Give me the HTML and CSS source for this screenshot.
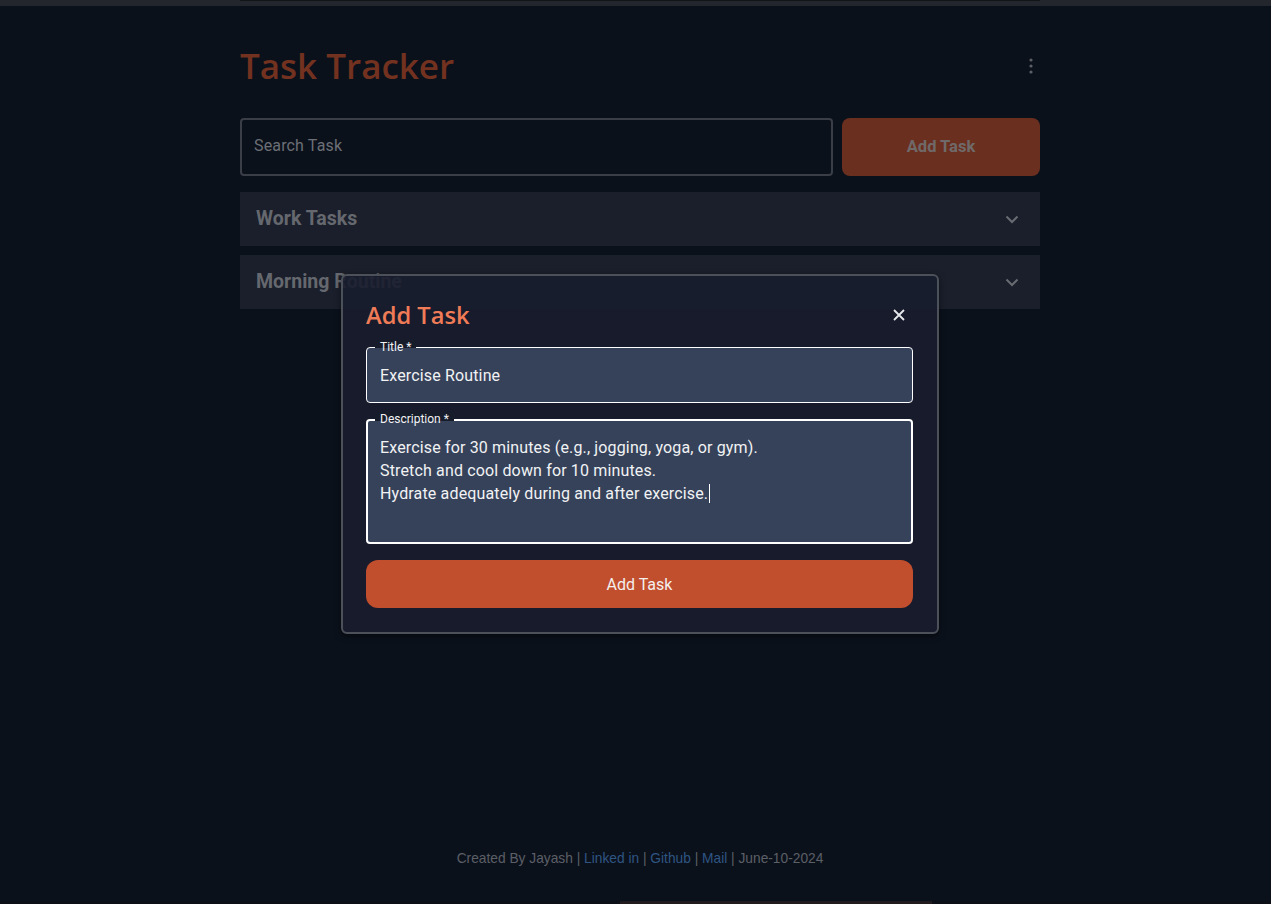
FILE: index.html
```html
<!DOCTYPE html>
<html>
<head>
<meta charset="utf-8">
<link rel="stylesheet" href="styles.css">
</head>
<body>
<div class="page">
  <div class="topbar"><div class="topline"></div></div>
  <main class="container">
    <header class="header">
      <h1 class="app-title">Task Tracker</h1>
      <svg class="kebab" width="6" height="16" viewBox="0 0 6 16"><circle cx="3" cy="2" r="1.6" fill="#5c6066"/><circle cx="3" cy="8" r="1.6" fill="#5c6066"/><circle cx="3" cy="14" r="1.6" fill="#5c6066"/></svg>
    </header>
    <div class="search-row">
      <div class="search-box"><span class="placeholder">Search Task</span></div>
      <div class="add-btn">Add Task</div>
    </div>
    <div class="accordion">
      <span class="acc-title">Work Tasks</span>
      <svg class="chev" width="14" height="9" viewBox="0 0 14 9"><path d="M1.5 1.5 L7 7 L12.5 1.5" stroke="#686b71" stroke-width="2" fill="none"/></svg>
    </div>
    <div class="accordion">
      <span class="acc-title">Morning Routine</span>
      <svg class="chev" width="14" height="9" viewBox="0 0 14 9"><path d="M1.5 1.5 L7 7 L12.5 1.5" stroke="#686b71" stroke-width="2" fill="none"/></svg>
    </div>
  </main>
  <footer class="footer">Created By Jayash | <a>Linked in</a> | <a>Github</a> | <a>Mail</a> | June-10-2024</footer>
  <div class="bottom-strip"><div class="bottom-bits"></div></div>
</div>

<div class="dialog">
  <div class="dlg-head">
    <h2 class="dlg-title">Add Task</h2>
    <svg class="close" width="14" height="14" viewBox="0 0 14 14"><path d="M2 2 L12 12 M12 2 L2 12" stroke="#e6e8ec" stroke-width="1.8"/></svg>
  </div>
  <div class="field title-field">
    <span class="flabel">Title *</span>
    <span class="fvalue">Exercise Routine</span>
  </div>
  <div class="field desc-field">
    <span class="flabel">Description *</span>
    <div class="fvalue">Exercise for 30 minutes (e.g., jogging, yoga, or gym).<br>Stretch and cool down for 10 minutes.<br>Hydrate adequately during and after exercise.<span class="caret"></span></div>
  </div>
  <div class="submit">Add Task</div>
</div>
</body>
</html>
```

FILE: styles.css
```css
* { box-sizing: border-box; }
html, body { margin: 0; padding: 0; }
body {
  background: #0b111b;
  font-family: Roboto, "Liberation Sans", sans-serif;
  width: 1271px;
  height: 904px;
  overflow: hidden;
}
.page {
  height: 904px;
  display: flex;
  flex-direction: column;
}
.topbar {
  height: 6px;
  background: #23272d;
  flex: none;
}
.topline {
  margin-left: 240px;
  width: 800px;
  height: 1px;
  background: #121418;
}
.container {
  width: 800px;
  margin-left: 240px;
}
.header {
  height: 52px;
  margin-top: 34px;
  display: flex;
  align-items: center;
  justify-content: space-between;
}
.app-title {
  margin: 0;
  font-family: "Open Sans", "Noto Sans", sans-serif;
  font-weight: 600;
  font-size: 35px;
  color: #73321f;
  line-height: 52px;
}
.kebab { margin-right: 6px; }
.search-row {
  margin-top: 26px;
  display: flex;
  gap: 9px;
  height: 58px;
}
.search-box {
  flex: none;
  width: 593px;
  border: 2px solid #3a3e46;
  border-radius: 4px;
  display: flex;
  align-items: center;
  padding: 0 0 3px 12px;
}
.placeholder {
  font-size: 16px;
  letter-spacing: 0.15px;
  color: #6b6f76;
}
.add-btn {
  flex: 1;
  background: #6b2f20;
  border-radius: 8px;
  display: flex;
  align-items: center;
  justify-content: center;
  padding-bottom: 1px;
  font-weight: 700;
  font-size: 16.5px;
  color: #6f6a69;
}
.accordion {
  margin-top: 16px;
  height: 54px;
  background: #1a1f2b;
  display: flex;
  align-items: center;
  justify-content: space-between;
  padding: 0 21px 1px 16px;
}
.accordion + .accordion { margin-top: 9px; }
.acc-title {
  font-weight: 700;
  font-size: 19.5px;
  color: #65686e;
}
.chev { margin-top: 2px; }
.footer {
  margin-top: auto;
  padding-left: 9px;
  text-align: center;
  font-family: "Liberation Sans", Arial, sans-serif;
  font-size: 13.75px;
  line-height: 20px;
  color: #5b5f66;
  padding-bottom: 32px;
}
.footer a { color: #2f5583; }
.bottom-strip {
  height: 3px;
  flex: none;
  background: #0c0f15;
}
.bottom-bits {
  margin-left: 620px;
  width: 312px;
  height: 3px;
  background: #211b1d;
}

.dialog {
  position: absolute;
  left: 341px;
  top: 274px;
  width: 598px;
  height: 360px;
  background: rgba(24, 29, 45, 0.9);
  border: 2px solid #4b5059;
  border-radius: 6px;
  box-shadow: 0 2px 6px rgba(0,0,0,0.5);
  padding: 23px 24px 24px 23px;
  display: flex;
  flex-direction: column;
}
.dlg-head {
  height: 32px;
  display: flex;
  align-items: center;
  justify-content: space-between;
}
.dlg-title {
  margin: 0;
  font-family: "Open Sans", "Noto Sans", sans-serif;
  font-weight: 600;
  font-size: 23.7px;
  color: #f07b57;
}
.close { margin-right: 7px; }
.field {
  position: relative;
  background: #36425a;
  border-radius: 4px;
  color: #f1f2f4;
  font-size: 16px;
  letter-spacing: 0.15px;
}
.title-field {
  margin-top: 16px;
  height: 56px;
  border: 1px solid #ffffff;
  display: flex;
  align-items: center;
  padding-left: 13px;
}
.desc-field {
  margin-top: 16px;
  height: 125px;
  border: 2px solid #ffffff;
  padding: 14.5px 12px;
}
.desc-field .fvalue { line-height: 23px; }
.flabel {
  position: absolute;
  top: -8px;
  left: 8px;
  padding: 0 5px;
  background: linear-gradient(#171c2b 0 8px, transparent 8px);
  font-size: 12px;
  line-height: 14px;
  letter-spacing: 0;
  color: #f1f2f4;
}
.desc-field .flabel {
  left: 7px;
  top: -9px;
  background: linear-gradient(#171c2b 0 9px, transparent 9px);
}
.caret {
  display: inline-block;
  width: 1px;
  height: 19px;
  background: #ffffff;
  vertical-align: -4px;
  margin-left: 1px;
}
.submit {
  margin-top: 16px;
  height: 48px;
  background: #c14e2d;
  border-radius: 12px;
  display: flex;
  align-items: center;
  justify-content: center;
  font-size: 16px;
  color: #f4efed;
}
```
